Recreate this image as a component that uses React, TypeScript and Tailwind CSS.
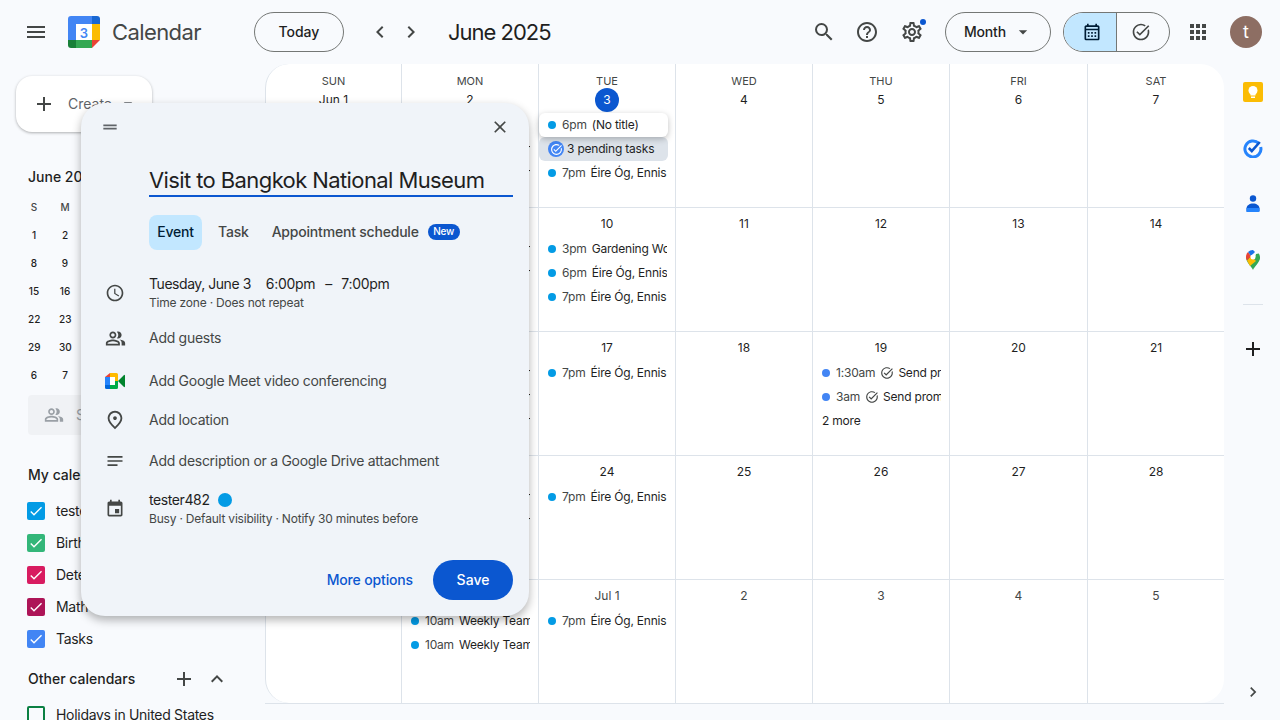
import React from 'react'
import {
  MdMenu, MdChevronLeft, MdChevronRight, MdSearch, MdHelpOutline, MdOutlineSettings, MdArrowDropDown,
  MdOutlineCalendarMonth, MdOutlineTaskAlt, MdApps, MdAdd, MdClose, MdDragHandle, MdOutlineSchedule,
  MdOutlinePeopleAlt, MdOutlinePlace, MdNotes, MdEvent, MdCheck, MdExpandLess,
} from 'react-icons/md'

function CalendarLogo() {
  return (
    <svg width="32" height="32" viewBox="0 0 32 32" className="shrink-0">
      <path d="M3 0h21v8H8v16H0V3a3 3 0 0 1 3-3z" fill="#4285f4" />
      <path d="M24 0h5a3 3 0 0 1 3 3v5h-8z" fill="#1967d2" />
      <rect x="24" y="8" width="8" height="16" fill="#fbbc04" />
      <rect x="8" y="24" width="16" height="8" fill="#34a853" />
      <path d="M0 24h8v8H3a3 3 0 0 1-3-3z" fill="#188038" />
      <path d="M24 24h8l-8 8z" fill="#ea4335" />
      <rect x="8" y="8" width="16" height="16" fill="#fff" />
      <text x="16" y="21.5" textAnchor="middle" fontSize="13" fontWeight="600" fill="#4285f4" fontFamily="Inter, sans-serif">3</text>
    </svg>
  )
}

function MeetLogo() {
  return (
    <svg width="20" height="18" viewBox="0 0 20 18">
      <path d="M5 1L0 5h5z" fill="#ea4335" />
      <path d="M5 1h6.500A1.500 1.500 0 0 1 13 2.500V9h-3V5H5z" fill="#ffba00" />
      <rect x="0" y="5" width="5" height="8" fill="#2684fc" />
      <path d="M0 13h5v4H1.500A1.500 1.500 0 0 1 0 15.500z" fill="#0066da" />
      <path d="M5 13h5V9h3v6.500a1.500 1.500 0 0 1-1.500 1.500H5z" fill="#00ac47" />
      <path d="M13 9l6-6a.6.6 0 0 1 1 .4v11.200a.6.6 0 0 1-1 .4z" fill="#00832d" />
      <rect x="5" y="5" width="5" height="8" fill="#fff" />
    </svg>
  )
}

function KeepLogo() {
  return (
    <svg width="20" height="20" viewBox="0 0 20 20">
      <rect width="20" height="20" rx="2" fill="#fbbc04" />
      <circle cx="10" cy="8.500" r="4.500" fill="#fff" />
      <rect x="7.500" y="11" width="5" height="2.500" fill="#fff" />
      <rect x="8" y="14.500" width="4" height="1.500" fill="#fff" />
    </svg>
  )
}

function TasksLogo() {
  return (
    <svg width="20" height="20" viewBox="0 0 20 20" fill="none">
      <path d="M15.800 5.500A8 8 0 1 0 17.700 9" stroke="#2684fc" strokeWidth="3" />
      <path d="M5.800 10l3 3 8-9" stroke="#0b57d0" strokeWidth="2.600" />
    </svg>
  )
}

function ContactsLogo() {
  return (
    <svg width="20" height="20" viewBox="0 0 20 20">
      <circle cx="10" cy="4.500" r="3.200" fill="#0b57d0" />
      <path d="M3.500 17.500v-3c0-3 3-5 6.500-5s6.500 2 6.500 5v3z" fill="#0b57d0" />
      <path d="M3.500 14h13v2.500a1.500 1.500 0 0 1-1.500 1.500H3.500z" fill="#2684fc" />
    </svg>
  )
}

function MapsLogo() {
  return (
    <svg width="14" height="20" viewBox="0 0 14 20">
      <path d="M7 20c-1-3-7-7.500-7-13h14c0 5.500-6 10-7 13z" fill="#34a853" />
      <path d="M1 10.500L5 6l5 5-6 5z" fill="#fbbc04" />
      <path d="M0 7a7 7 0 0 1 2-5l3 4-4 4.500A7 7 0 0 1 0 7z" fill="#ea4335" />
      <path d="M2 2a7 7 0 0 1 5-2l2 2-4 4z" fill="#1a73e8" />
      <path d="M14 7c0 1.500-.5 2.500-1.500 4.500L9 8l1-4 2.800-.500A7 7 0 0 1 14 7z" fill="#34a853" />
      <circle cx="7" cy="7" r="2.500" fill="#fff" />
    </svg>
  )
}

type Ev = { time: string; title: string; task?: boolean; color?: string }

const eire: Ev = { time: '7pm', title: 'Éire Óg, Ennis' }
const weekly: Ev = { time: '10am', title: 'Weekly Team' }

type Cell = { label: string; muted?: boolean; events?: Ev[]; more?: string }

const rows: Cell[][] = [
  [
    { label: 'Jun 1' },
    { label: '2', events: [{ time: '', title: '' }, weekly, weekly] },
    { label: '3' },
    { label: '4' }, { label: '5' }, { label: '6' }, { label: '7' },
  ],
  [
    { label: '8' },
    { label: '9', events: [weekly, weekly] },
    { label: '10', events: [{ time: '3pm', title: 'Gardening Workshop' }, { time: '6pm', title: 'Éire Óg, Ennis' }, eire] },
    { label: '11' }, { label: '12' }, { label: '13' }, { label: '14' },
  ],
  [
    { label: '15' },
    { label: '16', events: [weekly, weekly, weekly] },
    { label: '17', events: [eire] },
    { label: '18' },
    {
      label: '19',
      events: [
        { time: '1:30am', title: 'Send project', task: true, color: 'bg-[#4285f4]' },
        { time: '3am', title: 'Send prompt', task: true, color: 'bg-[#4285f4]' },
      ],
      more: '2 more',
    },
    { label: '20' }, { label: '21' },
  ],
  [
    { label: '22' },
    { label: '23', events: [weekly, weekly] },
    { label: '24', events: [eire] },
    { label: '25' }, { label: '26' }, { label: '27' }, { label: '28' },
  ],
  [
    { label: '29' },
    { label: '30', events: [weekly, weekly] },
    { label: 'Jul 1', muted: true, events: [eire] },
    { label: '2', muted: true }, { label: '3', muted: true }, { label: '4', muted: true }, { label: '5', muted: true },
  ],
]

const weekdays = ['SUN', 'MON', 'TUE', 'WED', 'THU', 'FRI', 'SAT']

function EventRow({ ev }: { ev: Ev }) {
  if (!ev.time) return <div className="h-6" />
  return (
    <div className="h-6 ml-[9px] mr-2 flex items-center text-xs tracking-[-0.2px] whitespace-nowrap overflow-hidden text-[#1f1f1f]">
      <span className={`w-2 h-2 rounded-full shrink-0 mr-[6px] ${ev.color ?? 'bg-[#039be5]'}`} />
      <span className="text-[#444746] mr-[5px]">{ev.time}</span>
      {ev.task && <MdOutlineTaskAlt className="shrink-0 mr-1 text-[#444746]" size={14} />}
      <span>{ev.title}</span>
    </div>
  )
}

function MonthCell({ cell, first }: { cell: Cell; first: boolean }) {
  const isToday = first && cell.label === '3'
  return (
    <div className="min-w-0">
      <div className={`flex items-center justify-center text-xs ${first ? 'h-6 mb-px' : 'h-[29px] pt-[3px]'} ${cell.muted ? 'text-[#444746]' : 'text-[#1f1f1f]'}`}>
        {isToday ? (
          <span className="w-6 h-6 rounded-full bg-[#0b57d0] text-white flex items-center justify-center">3</span>
        ) : (
          cell.label
        )}
      </div>
      {isToday && (
        <div>
          <div className="h-6 rounded-md bg-white shadow-[0_2px_6px_rgba(0,0,0,0.25)] pl-[9px] flex items-center text-xs tracking-[-0.2px] mr-[7px] relative">
            <span className="w-2 h-2 rounded-full bg-[#039be5] mr-[6px]" />
            <span className="text-[#444746] mr-[5px]">6pm</span>
            <span className="text-[#1f1f1f]">(No title)</span>
          </div>
          <div className="h-6 rounded-md bg-[#dde3ea] pl-[9px] flex items-center text-xs tracking-[-0.2px] text-[#1f1f1f] mr-[7px]">
            <span className="w-4 h-4 rounded-full bg-[#4285f4] text-white flex items-center justify-center mr-[3px]">
              <MdOutlineTaskAlt size={13} />
            </span>
            3 pending tasks
          </div>
          <EventRow ev={eire} />
        </div>
      )}
      {cell.events?.map((ev, i) => <EventRow key={i} ev={ev} />)}
      {cell.more && <div className="h-6 pl-[9px] flex items-center text-xs tracking-[-0.2px] text-[#1f1f1f]">{cell.more}</div>}
    </div>
  )
}

const miniRows = [
  ['1', '2'], ['8', '9'], ['15', '16'], ['22', '23'], ['29', '30'], ['6', '7'],
]

const calendars = [
  { name: 'tester482', color: 'bg-[#039be5]' },
  { name: 'Birthdays', color: 'bg-[#33b679]' },
  { name: 'Deterministic', color: 'bg-[#d81b60]' },
  { name: 'Math', color: 'bg-[#ad1457]' },
  { name: 'Tasks', color: 'bg-[#4285f4]' },
]

function Sidebar() {
  return (
    <aside className="w-[265px] shrink-0 h-full overflow-hidden pl-4 pt-3">
      <div className="w-[136px] h-14 rounded-2xl bg-white shadow-[0_1px_3px_rgba(0,0,0,0.3)] flex items-center pl-[16px] text-sm text-[#5f6368]">
        <MdAdd size={24} className="text-[#444746]" />
        <span className="ml-3">Create</span>
        <MdArrowDropDown size={20} className="ml-[6px]" />
      </div>
      <div className="pl-3 mt-[35px] text-sm font-medium text-[#1f1f1f] leading-5">June 2025</div>
      <div className="mt-[6px] pl-3">
        <div className="grid grid-cols-[31px_31px] h-[28px] items-center text-[10px] font-medium text-[#444746] text-center">
          <span className="w-3">S</span>
          <span className="w-3">M</span>
        </div>
        {miniRows.map(r => (
          <div key={r[0]} className="grid grid-cols-[31px_31px] h-[28px] items-center text-[10px] font-medium text-[#1f1f1f] text-center">
            <span className="w-3">{r[0]}</span>
            <span className="w-3">{r[1]}</span>
          </div>
        ))}
      </div>
      <div className="ml-3 mt-[6px] w-[210px] h-10 bg-[#f0f2f5] rounded flex items-center pl-4 text-sm text-[#9aa0a6]">
        <MdOutlinePeopleAlt size={20} />
        <span className="ml-3">Search for people</span>
      </div>
      <div className="pl-3 mt-[30px] text-sm font-medium text-[#1f1f1f] leading-5">My calendars</div>
      <div className="mt-[10px]">
        {calendars.map(c => (
          <div key={c.name} className="h-8 pl-[11px] flex items-center text-sm tracking-[-0.3px] text-[#1f1f1f]">
            <span className={`w-[18px] h-[18px] rounded-[2px] flex items-center justify-center text-white ${c.color}`}>
              <MdCheck size={16} />
            </span>
            <span className="ml-[11px]">{c.name}</span>
          </div>
        ))}
      </div>
      <div className="pl-3 mt-[12px] pr-[36px] h-6 flex items-center justify-between text-sm font-medium text-[#1f1f1f]">
        <span>Other calendars</span>
        <span className="flex items-center gap-[9px] text-[#444746]">
          <MdAdd size={24} />
          <MdExpandLess size={24} />
        </span>
      </div>
      <div className="h-8 mt-[8px] pl-[11px] flex items-center text-sm tracking-[-0.3px] text-[#1f1f1f]">
        <span className="w-[18px] h-[18px] rounded-[2px] border-2 border-[#0b8043] shrink-0" />
        <span className="ml-[11px] whitespace-nowrap">Holidays in United States</span>
      </div>
    </aside>
  )
}

function CalendarGrid() {
  return (
    <div className="w-[959px] shrink-0 h-[640px] border-b border-[#dde3ea]">
      <div className="h-[639px] bg-white rounded-[24px] border-l border-[#dde3ea] overflow-hidden grid grid-rows-[143px_124px_124px_124px_124px]">
        {rows.map((row, ri) => (
          <div key={ri} className={`grid grid-cols-[136px_137px_137px_137px_137px_138px_136px] ${ri > 0 ? 'border-t border-[#dde3ea]' : ''}`}>
            {row.map((cell, ci) => (
              <div key={ci} className={`min-w-0 ${ci === 6 ? '' : 'border-r border-[#dde3ea]'}`}>
                {ri === 0 && (
                  <div className="h-6 pt-[10px] flex items-center justify-center text-[11px] leading-4 text-[#444746]">
                    {weekdays[ci]}
                  </div>
                )}
                <MonthCell cell={cell} first={ri === 0} />
              </div>
            ))}
          </div>
        ))}
      </div>
    </div>
  )
}

function RightRail() {
  return (
    <aside className="flex-1 h-full flex flex-col items-center pl-[1px]">
      <div className="h-5 mt-[18px] flex items-center"><KeepLogo /></div>
      <div className="h-5 mt-9 flex items-center"><TasksLogo /></div>
      <div className="h-5 mt-9 flex items-center"><ContactsLogo /></div>
      <div className="h-5 mt-9 flex items-center"><MapsLogo /></div>
      <div className="w-5 h-px bg-[#dde3ea] mt-[34px]" />
      <MdAdd size={24} className="mt-[32px] text-[#1f1f1f]" />
      <MdChevronRight size={20} className="mt-auto mb-[18px] text-[#444746]" />
    </aside>
  )
}

function PopupRow({ icon, children, className }: { icon: React.ReactNode; children: React.ReactNode; className?: string }) {
  return (
    <div className={`flex items-center ${className ?? ''}`}>
      <div className="w-[68px] flex justify-center shrink-0 text-[#444746]">{icon}</div>
      <div className="min-w-0">{children}</div>
    </div>
  )
}

function EventPopup() {
  return (
    <div className="absolute left-[81px] top-[103px] w-[448px] h-[513px] rounded-[24px] bg-[#f0f4f9] shadow-[0_4px_10px_rgba(0,0,0,0.3)]">
      <div className="h-12 flex items-center justify-between pl-[19px] pr-[19px]">
        <MdDragHandle size={20} className="text-[#5f6368]" />
        <MdClose size={20} className="text-[#444746]" />
      </div>
      <div className="ml-[68px] mr-4 mt-[13px] h-[33px] border-b-2 border-[#0b57d0] text-[22px] leading-8 tracking-[-0.6px] text-[#1f1f1f] whitespace-nowrap">
        Visit to Bangkok National Museum
      </div>
      <div className="ml-[68px] mt-[18px] h-[35px] flex items-center text-sm tracking-[-0.2px] text-[#444746]">
        <span className="h-[35px] w-[53px] pb-px rounded-lg bg-[#c2e7ff] flex items-center justify-center font-medium text-[#001d35]">Event</span>
        <span className="ml-4 -mt-px font-medium">Task</span>
        <span className="ml-[23px] -mt-px font-medium">Appointment schedule</span>
        <span className="ml-[9px] h-4 w-8 rounded-full bg-[#0b57d0] text-white text-[10px] font-medium flex items-center justify-center -mt-[2px]">New</span>
      </div>
      <PopupRow icon={<MdOutlineSchedule size={20} className="mt-[2px]" />} className="mt-[22px] h-[40px]">
        <div className="flex text-sm leading-5 text-[#1f1f1f]">
          <span className="tracking-[-0.45px]">Tuesday, June 3</span>
          <span className="ml-[15px] tracking-[-0.3px]">6:00pm</span>
          <span className="ml-[10px]">–</span>
          <span className="ml-[9px] tracking-[-0.3px]">7:00pm</span>
        </div>
        <div className="text-xs leading-4 mt-[1px] tracking-[-0.2px] text-[#444746]">Time zone · Does not repeat</div>
      </PopupRow>
      <PopupRow icon={<MdOutlinePeopleAlt size={21} />} className="mt-[14px] h-6">
        <div className="text-sm tracking-[-0.28px] text-[#444746]">Add guests</div>
      </PopupRow>
      <PopupRow icon={<MeetLogo />} className="mt-[19px] h-6">
        <div className="text-sm tracking-[-0.28px] text-[#444746]">Add Google Meet video conferencing</div>
      </PopupRow>
      <PopupRow icon={<MdOutlinePlace size={22} />} className="mt-[15px] h-6">
        <div className="text-sm tracking-[-0.28px] text-[#444746]">Add location</div>
      </PopupRow>
      <PopupRow icon={<MdNotes size={20} />} className="mt-[17px] h-6">
        <div className="text-sm tracking-[-0.28px] text-[#444746]">Add description or a Google Drive attachment</div>
      </PopupRow>
      <PopupRow icon={<MdEvent size={20} className="mt-[2px]" />} className="mt-[15px] h-[40px]">
        <div className="flex items-center text-sm leading-5 tracking-[-0.4px] text-[#1f1f1f]">
          tester482
          <span className="w-[14px] h-[14px] rounded-full bg-[#039be5] ml-2" />
        </div>
        <div className="text-xs leading-4 mt-[1px] tracking-[-0.2px] text-[#444746]">Busy · Default visibility · Notify 30 minutes before</div>
      </PopupRow>
      <div className="mt-[32px] pr-4 flex items-center justify-end">
        <span className="text-sm font-medium tracking-[-0.15px] text-[#0b57d0]">More options</span>
        <span className="ml-5 w-20 h-10 rounded-full bg-[#0b57d0] text-white text-sm font-medium flex items-center justify-center">Save</span>
      </div>
    </div>
  )
}

export default function App() {
  return (
    <div className="relative w-[1280px] h-[720px] overflow-hidden bg-[#f8fafd] font-['Inter',sans-serif]">
      {/* TOP BAR */}
      <header className="h-16 flex items-center text-[#444746]">
        <div className="w-[72px] flex justify-center"><MdMenu size={24} /></div>
        <div className="-ml-1"><CalendarLogo /></div>
        <span className="ml-3 text-[22px] tracking-[-0.6px] text-[#444746]">Calendar</span>
        <span className="ml-[53px] w-[90px] h-10 rounded-full border border-[#747775] text-sm font-medium text-[#1f1f1f] flex items-center justify-center">Today</span>
        <MdChevronLeft size={24} className="ml-[24px]" />
        <MdChevronRight size={24} className="ml-[7px]" />
        <span className="ml-[25px] text-[22px] tracking-[-1px] text-[#1f1f1f]">June 2025</span>
        <div className="ml-auto flex items-center pr-[18px]">
          <MdSearch size={24} />
          <MdHelpOutline size={24} className="ml-[19px]" />
          <div className="relative ml-[21px]">
            <MdOutlineSettings size={24} />
            <span className="absolute -top-[1px] -right-[2px] w-[6px] h-[6px] rounded-full bg-[#0b57d0]" />
          </div>
          <span className="ml-[21px] w-[106px] h-10 rounded-full border border-[#747775] flex items-center pl-[18px] text-sm font-medium tracking-[-0.2px] text-[#1f1f1f]">
            Month
            <MdArrowDropDown size={20} className="ml-[7px] text-[#444746]" />
          </span>
          <div className="ml-3 w-[107px] h-10 rounded-full border border-[#747775] flex overflow-hidden">
            <div className="w-[53px] pl-1 bg-[#c2e7ff] border-r border-[#747775] flex items-center justify-center text-[#001d35]">
              <MdOutlineCalendarMonth size={20} />
            </div>
            <div className="flex-1 pr-1 flex items-center justify-center">
              <MdOutlineTaskAlt size={20} />
            </div>
          </div>
          <MdApps size={24} className="ml-4" />
          <span className="ml-5 w-8 h-8 rounded-full bg-[#8d6e63] text-white text-lg flex items-center justify-center">t</span>
        </div>
      </header>

      <div className="flex h-[656px]">
        <Sidebar />
        <CalendarGrid />
        <RightRail />
      </div>

      <EventPopup />
    </div>
  )
}
